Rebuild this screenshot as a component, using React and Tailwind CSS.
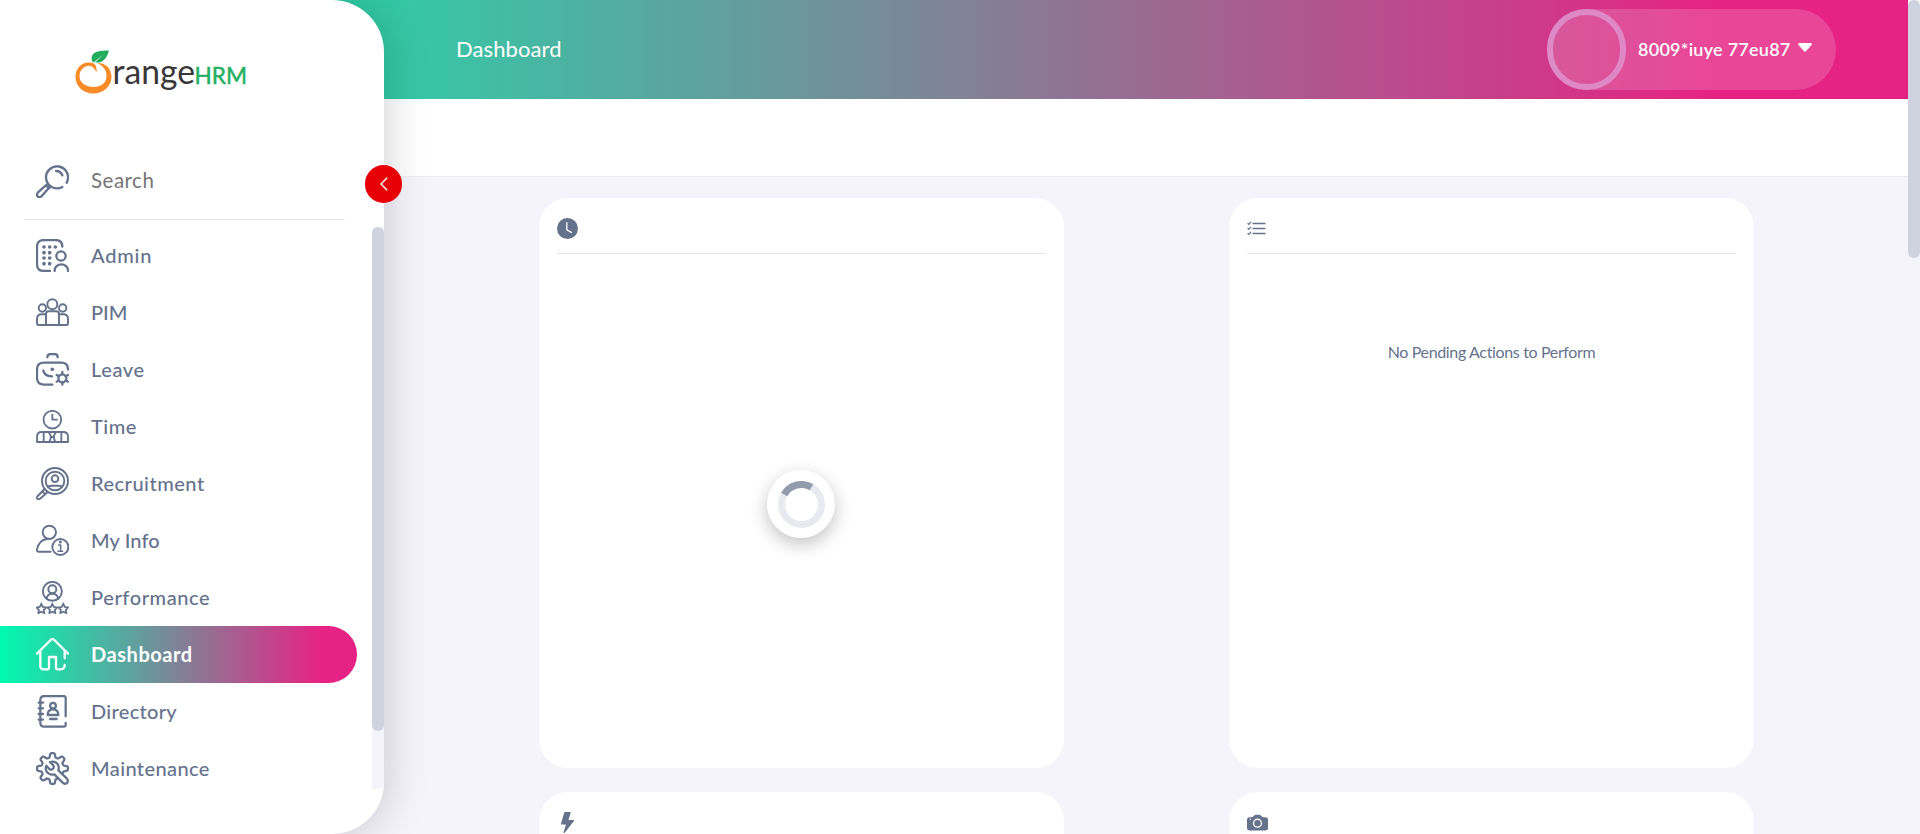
import React from "react";
import { BsClockFill, BsLightningFill, BsCameraFill } from "react-icons/bs";

const starPoints = (cx, cy, outer, inner, n = 5) =>
  Array.from({ length: n * 2 }, (_, i) => {
    const r = i % 2 ? inner : outer;
    const a = -Math.PI / 2 + (i * Math.PI) / n;
    return `${(cx + r * Math.cos(a)).toFixed(1)},${(cy + r * Math.sin(a)).toFixed(1)}`;
  }).join(" ");

// Scalloped cog outline, left open where the wrench handle leaves it.
const cogPoints = Array.from({ length: 150 }, (_, i) => {
  const a = ((63 + (i * 322) / 149) * Math.PI) / 180;
  const r = 40 + 6.5 * Math.tanh(2.2 * Math.cos(8 * a));
  return `${(49.5 + r * Math.cos(a)).toFixed(1)},${(49.5 + r * Math.sin(a)).toFixed(1)}`;
}).join(" ");

function Icon({ children, w = 6.8 }) {
  return (
    <svg
      className="size-[33px] shrink-0"
      viewBox="0 0 99 99"
      fill="none"
      stroke="currentColor"
      strokeWidth={w}
      strokeLinecap="round"
      strokeLinejoin="round"
    >
      {children}
    </svg>
  );
}

const SearchIcon = () => (
  <Icon w={7}>
    <path d="M79 66 A33 33 0 1 1 92 53" />
    <path d="M60 18 Q74 18 79 31" />
    <path d="M32 59 L6 82 Q0 90 6 95 Q12 99 18 92 L41 66 M31 62 L40 70" />
  </Icon>
);

const AdminIcon = () => (
  <Icon>
    <path d="M42 96 H24 Q3 96 3 75 V24 Q3 3 24 3 H58 Q79 3 79 23" />
    <g fill="currentColor" stroke="none">
      {[[24, 24], [41, 24], [58, 24], [24, 41], [41, 41], [24, 57], [41, 57], [24, 74], [41, 74]].map(([x, y]) => (
        <circle key={`${x}-${y}`} cx={x} cy={y} r="5.500" />
      ))}
    </g>
    <circle cx="75" cy="51" r="14" />
    <path d="M56 96 V94 A20 18 0 0 1 96 94 V96" />
  </Icon>
);

const PimIcon = () => (
  <Icon w={5.8}>
    <circle cx="49" cy="25" r="15" />
    <circle cx="19" cy="36" r="11" />
    <circle cx="80" cy="36" r="11" />
    <path d="M30 87 V54 Q30 46 38 46 H61 Q69 46 69 54 V87" />
    <path d="M28 55 H17 Q3 55 3 69 V82 Q3 87 8 87 H91 Q96 87 96 82 V69 Q96 55 82 55 H71" />
  </Icon>
);

const LeaveIcon = () => (
  <Icon>
    <path d="M34 13 Q34 3 44 3 H56 Q65 3 65 13" />
    <path d="M49 95 H24 Q3 95 3 74 V50 Q3 29 24 29 H76 Q96 29 96 50" />
    <path d="M22 52 Q24 69 48 70" />
    <circle cx="49" cy="49" r="5.500" fill="currentColor" stroke="none" />
    <circle cx="79" cy="76" r="12" />
    <path d="M79 64 V57 M79 88 V95 M69 70 L62 66 M89 70 L96 66 M69 82 L62 86 M89 82 L96 86" />
  </Icon>
);

const TimeIcon = () => (
  <Icon w={5.5}>
    <circle cx="49" cy="29" r="26.500" />
    <path d="M49 12 V29 H65" strokeLinecap="butt" />
    <path d="M3 96 V81 Q3 66 17 66 H82 Q96 66 96 81 V96 Z M23 66 V96 M76 66 V96" />
    <path d="M39 68 L44 77 V85 L40 96 M59 68 L54 77 V85 L58 96 M44 81 H54" />
  </Icon>
);

const RecruitmentIcon = () => (
  <Icon w={5.8}>
    <circle cx="57" cy="42" r="39" />
    <circle cx="57" cy="42" r="28" />
    <circle cx="57" cy="35" r="10" />
    <path d="M36 59 Q41 56 48 56 H66 Q73 56 78 59" />
    <path d="M26 66 L5 87 Q0 93 5 96 Q9 98 14 94 L35 75 M19 73 L28 82" />
  </Icon>
);

const MyInfoIcon = () => (
  <Icon w={5.8}>
    <circle cx="40" cy="25" r="20" />
    <path d="M44 83 H7 Q2 83 3 76 Q9 48 33 45" />
    <circle cx="73" cy="69" r="24" />
    <path d="M68 63 H74 V80 M66 82 H80" strokeWidth="4.500" />
    <circle cx="73" cy="54" r="4.500" fill="currentColor" stroke="none" />
  </Icon>
);

const PerformanceIcon = () => (
  <Icon w={5.8}>
    <circle cx="49" cy="31" r="28.500" />
    <circle cx="49" cy="25" r="12" />
    <path d="M32 53 Q34 38 49 38 Q64 38 67 53" />
    {[16, 49, 82].map((x) => (
      <polygon key={x} points={starPoints(x, 84, 15, 8)} strokeWidth="5.500" strokeLinejoin="miter" />
    ))}
  </Icon>
);

const DashboardIcon = () => (
  <Icon>
    <path d="M3 47 L44 6 Q49 1 55 6 L96 47" />
    <path d="M13 40 V84 Q13 94 23 94 H35 Q39 94 39 90 V57 H60 V90 Q60 94 64 94 H74 Q86 94 86 81 M86 40 V61" />
  </Icon>
);

const DirectoryIcon = () => (
  <Icon>
    <path d="M89 64 V9 Q89 3 83 3 H25 Q13 3 13 15 V83 Q13 95 25 95 H83 Q89 95 89 90 V84" />
    <path d="M8 23 H21 M8 40 H21 M8 57 H21 M8 74 H21" />
    <circle cx="51" cy="32" r="8.500" />
    <path d="M35 60 Q35 43 51 43 Q67 43 67 60 Z M42 72 H62" />
  </Icon>
);

const MaintenanceIcon = () => (
  <Icon>
    <polyline points={cogPoints} />
    <path d="M42 30 Q58 26 66 38 Q70 46 67 55 L93 80 Q98 87 93 93 Q86 98 80 92 L55 67 Q41 71 32 59 Q27 50 31 41 L41 52 Q49 54 52 49 Q54 44 52 40 Z" />
  </Icon>
);

const ITEMS = [
  { label: "Admin", icon: AdminIcon, track: "tracking-[0.8px]" },
  { label: "PIM", icon: PimIcon, track: "tracking-[0px]" },
  { label: "Leave", icon: LeaveIcon, track: "tracking-[0.6px]" },
  { label: "Time", icon: TimeIcon, track: "tracking-[0.5px]" },
  { label: "Recruitment", icon: RecruitmentIcon, track: "tracking-[0.5px]" },
  { label: "My Info", icon: MyInfoIcon, track: "tracking-[0.1px]" },
  { label: "Performance", icon: PerformanceIcon, track: "tracking-[0.6px]" },
  { label: "Dashboard", icon: DashboardIcon, track: "tracking-[0.55px]", active: true },
  { label: "Directory", icon: DirectoryIcon, track: "tracking-[0.3px]" },
  { label: "Maintenance", icon: MaintenanceIcon, track: "tracking-[0.4px]" },
];

function Logo() {
  return (
    <svg className="h-[60px] w-[180px]" viewBox="70 40 180 60">
      <path
        d="M94 63.500 C84 60 75.500 67 75.500 77 C75.500 87 84 93.500 93.500 93.500 C103 93.500 111.500 86 111.500 77 C111.500 68 105 62.500 97 63 C102 65 106.500 69 106.500 76 C106.500 83 101 87 93.500 87 C86 87 79.500 83 79.500 76 C79.500 69 86 65 90 66 C93 66.500 95 69 96.500 72.500 C97 68 96 65 94 63.500 Z"
        fill="#f98a26"
      />
      <path d="M92 61 C90 54 95 50 109 50.500 C107 58 103 63.500 95 62.500 L104 54 L93.500 62.500 Z" fill="#21ab5c" />
      <text x="112.500" y="84" fontFamily="Lato, sans-serif" fontSize="34" fill="#3a3739" textLength="82.500" lengthAdjust="spacingAndGlyphs">
        range
      </text>
      <text x="194.500" y="84" fontFamily="Lato, sans-serif" fontSize="24" fill="#24b061" stroke="#24b061" strokeWidth="0.500" textLength="52.500" lengthAdjust="spacingAndGlyphs">
        HRM
      </text>
    </svg>
  );
}

function ChecklistIcon() {
  return (
    <svg className="h-[14px] w-[19px]" viewBox="0 0 19 14" fill="none" stroke="currentColor">
      <path d="M5.500 2.500 H18.500 M5.500 7.500 H18.500 M5.500 12.500 H18.500" strokeWidth="1.300" />
      <path d="M0.600 2.300 L1.800 3.400 L4 0.800 M0.600 7.300 L1.800 8.400 L4 5.800 M0.600 12.300 L1.800 13.400 L4 10.800" strokeWidth="1.200" />
    </svg>
  );
}

function Card({ icon, children }) {
  return (
    <section className="flex h-[570px] w-[525px] shrink-0 flex-col rounded-[29px] bg-white px-[18px]">
      <div className="flex h-14 shrink-0 items-center border-b border-[#e6e7e9] pt-[5px] text-[#64728c]">{icon}</div>
      {children}
    </section>
  );
}

function Spinner() {
  return (
    <div className="flex size-[68px] items-center justify-center rounded-full bg-white shadow-[0_6px_18px_rgba(0,0,0,0.24)]">
      <svg className="size-[47px]" viewBox="0 0 47 47" fill="none" strokeWidth="7">
        <circle cx="23.500" cy="23.500" r="20" stroke="#e8eaef" />
        <path d="M6.200 13.500 A20 20 0 0 1 33.500 6.200" stroke="#929bab" />
      </svg>
    </div>
  );
}

export default function App() {
  return (
    <div className="flex h-[834px] w-full overflow-hidden bg-[#f5f4fb] font-['Lato',sans-serif] text-[#64728c]">
      <aside className="relative z-20 flex w-96 shrink-0 flex-col rounded-r-[52px] bg-white shadow-[0_0_46px_rgba(0,0,0,0.2)]">
        <div className="h-[144px] shrink-0 pl-[70px] pt-10">
          <Logo />
        </div>
        <div className="ml-6 mr-[39px] flex h-[76px] shrink-0 items-center gap-[22px] border-b border-[#e8e9eb] pl-3">
          <SearchIcon />
          <span className="pb-0.5 text-[20.500px] tracking-[0.5px] text-[#767676]">Search</span>
        </div>
        <button className="absolute left-[365px] top-[165px] flex h-[38px] w-[37px] items-center justify-center rounded-full bg-[#e80007]">
          <svg className="h-[14px] w-2" viewBox="0 0 8 14" fill="none" stroke="white" strokeWidth="1.400">
            <path d="M7.200 0.700 L1 7 L7.200 13.300" />
          </svg>
        </button>
        <div className="mt-[7px] flex h-[562px] justify-between">
          <nav className="w-[357px] overflow-hidden">
            {ITEMS.map(({ label, icon: I, track, active }) => (
              <a
                key={label}
                className={
                  "flex h-[57px] items-center gap-[22px] pl-9 " +
                  (active
                    ? "rounded-r-full bg-[linear-gradient(90deg,#00fab0_0%,#e62384_90%)] font-bold text-white"
                    : "font-medium")
                }
              >
                <I />
                <span className={"pb-0.5 text-[20px] leading-7 " + track}>{label}</span>
              </a>
            ))}
          </nav>
          <div className="w-3 bg-[#f5f4fb]">
            <div className="h-[504px] rounded-full bg-[#cfd3df]" />
          </div>
        </div>
      </aside>

      <div className="min-w-0 flex-1">
        <header className="-ml-96 flex h-[99px] items-center justify-between bg-[linear-gradient(90deg,#00fab0_0%,#e62384_90%)] pl-[456px] pr-[72px] text-white">
          <h1 className="pb-0.5 text-[22px] tracking-[0.1px]">Dashboard</h1>
          <div className="flex h-[81px] w-[289px] items-center rounded-full bg-white/16">
            <div className="h-[81px] w-[79px] rounded-full border-[6px] border-[#dfa0d8]/70" />
            <span className="ml-3 whitespace-nowrap text-[18px] font-semibold tracking-[0.25px]">8009*iuye 77eu87</span>
            <svg className="mb-1 ml-[7px] h-[9px] w-[14px]" viewBox="0 0 14 9" fill="currentColor">
              <path d="M1.200 0 H12.800 Q14.500 0.500 13.500 2 L8.200 8 Q7 9.300 5.800 8 L0.500 2 Q-0.500 0.500 1.200 0 Z" />
            </svg>
          </div>
        </header>
        <div className="h-[78px] border-b border-[#eeeef2] bg-white" />
        <main className="grid grid-cols-[525px_525px] gap-x-[165px] gap-y-6 pl-[155px] pt-[21px]">
          <Card icon={<BsClockFill className="size-[21px]" />}>
            <div className="flex justify-center pr-px pt-[216px]">
              <Spinner />
            </div>
          </Card>
          <Card icon={<ChecklistIcon />}>
            <p className="pt-[86px] text-center text-[16px] leading-6 tracking-[-0.35px]">No Pending Actions to Perform</p>
          </Card>
          <Card icon={<BsLightningFill className="size-[21px]" />} />
          <Card icon={<BsCameraFill className="size-[21px]" />} />
        </main>
      </div>
      <div className="w-3 shrink-0 bg-[#f5f4fb]">
        <div className="h-[258px] rounded-full bg-[#cfd3df]" />
      </div>
    </div>
  );
}
